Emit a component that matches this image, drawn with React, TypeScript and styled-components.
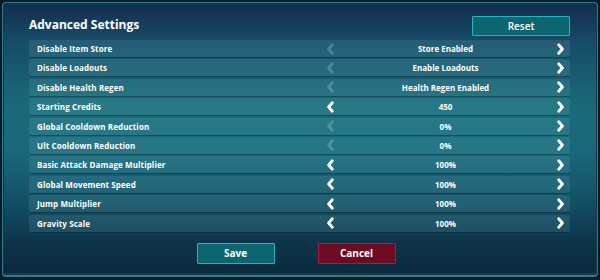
import { createGlobalStyle, styled } from "styled-components";

const GlobalStyle = createGlobalStyle`
  html, body {
    margin: 0;
    padding: 0;
    width: 600px;
    height: 280px;
    overflow: hidden;
    background: #0a1d2b;
    font-family: "Open Sans", "DejaVu Sans", sans-serif;
  }
  * { box-sizing: border-box; }
`;

const Frame = styled.div`
  width: 600px;
  height: 280px;
  padding: 2px 2px 3px 2px;
  background: #081a26;
`;

const Panel = styled.div`
  height: 100%;
  border: 1px solid #2e7d8a;
  border-bottom: 2px solid #2e7d8a;
  border-radius: 4px;
  box-shadow: inset 0 0 0 1px #0d3a48, inset 0 -2px 0 #173f4e;
  background:
    linear-gradient(
      180deg,
      #132d4e 0%,
      #174b67 14%,
      #1a6a78 38%,
      #19687a 55%,
      #144c62 75%,
      #0d3449 88%,
      #0b2a3d 100%
    );
  padding: 13px 26px 0 26px;
  display: flex;
  flex-direction: column;
`;

const Header = styled.div`
  display: flex;
  align-items: flex-end;
  justify-content: space-between;
  height: 20px;
  margin-bottom: 4px;
`;

const Title = styled.h1`
  margin: 0 0 3px 0;
  font-size: 12px;
  font-weight: 700;
  color: #ffffff;
  letter-spacing: 0;
`;

const Button = styled.button<{ $variant: "teal" | "red" }>`
  width: 78px;
  height: 21px;
  padding: 0;
  border: 1px solid ${(p) => (p.$variant === "red" ? "#a81d3d" : "#1fb8c2")};
  background: ${(p) => (p.$variant === "red" ? "#6c0b22" : "#0b6670")};
  color: #ffffff;
  font-family: "Open Sans", "DejaVu Sans", sans-serif;
  font-size: 10px;
  font-weight: 700;
  border-radius: 1px;
  cursor: pointer;
`;

const ResetButton = styled(Button)`
  width: 98px;
  height: 20px;
  margin-right: 1px;
  font-weight: 600;
`;

const List = styled.div`
  display: grid;
  grid-auto-rows: 17px;
  row-gap: 2.4px;
  margin-right: 1px;
`;

const Row = styled.div`
  display: grid;
  grid-template-columns: 1fr 246px;
  align-items: center;
  background: rgba(120, 200, 210, 0.15);
  border-radius: 2px;
  box-shadow: 0 1px 0 rgba(0, 20, 30, 0.3);
`;

const Label = styled.span`
  padding-left: 8px;
  font-size: 8px;
  font-weight: 700;
  color: #ffffff;
  letter-spacing: 0.1px;
  white-space: nowrap;
`;

const Control = styled.div`
  display: flex;
  align-items: center;
  justify-content: space-between;
  padding: 0 5px 0 2px;
`;

const Value = styled.span`
  font-size: 8px;
  font-weight: 700;
  color: #ffffff;
  white-space: nowrap;
`;

const Arrow = styled.svg<{ $dim?: boolean }>`
  width: 9px;
  height: 12px;
  display: block;
  opacity: ${(p) => (p.$dim ? 0.28 : 1)};
`;

const Footer = styled.div`
  display: flex;
  justify-content: center;
  gap: 43px;
  margin-top: 11px;
  padding-right: 8px;
`;

function Chevron({ dir, dim }: { dir: "left" | "right"; dim?: boolean }) {
  const d = dir === "left" ? "M6.3 1.8 L2.6 6 L6.3 10.2" : "M2.7 1.8 L6.4 6 L2.7 10.2";
  return (
    <Arrow viewBox="0 0 9 12" $dim={dim}>
      <path
        d={d}
        fill="none"
        stroke={dim ? "#b9dfe6" : "#ffffff"}
        strokeWidth="2.8"
        strokeLinecap="round"
        strokeLinejoin="round"
      />
    </Arrow>
  );
}

const settings = [
  { label: "Disable Item Store", value: "Store Enabled", min: true },
  { label: "Disable Loadouts", value: "Enable Loadouts", min: true },
  { label: "Disable Health Regen", value: "Health Regen Enabled", min: true },
  { label: "Starting Credits", value: "450", min: false },
  { label: "Global Cooldown Reduction", value: "0%", min: true },
  { label: "Ult Cooldown Reduction", value: "0%", min: true },
  { label: "Basic Attack Damage Multiplier", value: "100%", min: false },
  { label: "Global Movement Speed", value: "100%", min: false },
  { label: "Jump Multiplier", value: "100%", min: false },
  { label: "Gravity Scale", value: "100%", min: false },
];

export default function App() {
  return (
    <>
      <GlobalStyle />
      <Frame>
        <Panel>
          <Header>
            <Title>Advanced Settings</Title>
            <ResetButton $variant="teal">Reset</ResetButton>
          </Header>
          <List>
            {settings.map((s) => (
              <Row key={s.label}>
                <Label>{s.label}</Label>
                <Control>
                  <Chevron dir="left" dim={s.min} />
                  <Value>{s.value}</Value>
                  <Chevron dir="right" />
                </Control>
              </Row>
            ))}
          </List>
          <Footer>
            <Button $variant="teal">Save</Button>
            <Button $variant="red">Cancel</Button>
          </Footer>
        </Panel>
      </Frame>
    </>
  );
}
